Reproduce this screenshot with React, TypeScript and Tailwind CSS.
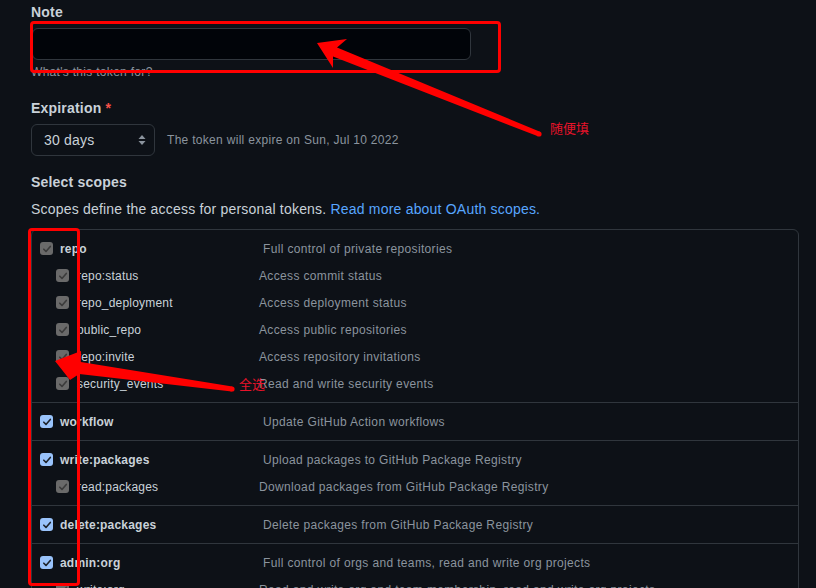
import React from 'react';

type Scope = { name: string; desc: string; checked: 'gray' | 'blue' };
type Group = { parent: Scope; children: Scope[] };

const GROUPS: Group[] = [
  {
    parent: { name: 'repo', desc: 'Full control of private repositories', checked: 'gray' },
    children: [
      { name: 'repo:status', desc: 'Access commit status', checked: 'gray' },
      { name: 'repo_deployment', desc: 'Access deployment status', checked: 'gray' },
      { name: 'public_repo', desc: 'Access public repositories', checked: 'gray' },
      { name: 'repo:invite', desc: 'Access repository invitations', checked: 'gray' },
      { name: 'security_events', desc: 'Read and write security events', checked: 'gray' },
    ],
  },
  {
    parent: { name: 'workflow', desc: 'Update GitHub Action workflows', checked: 'blue' },
    children: [],
  },
  {
    parent: { name: 'write:packages', desc: 'Upload packages to GitHub Package Registry', checked: 'blue' },
    children: [{ name: 'read:packages', desc: 'Download packages from GitHub Package Registry', checked: 'gray' }],
  },
  {
    parent: { name: 'delete:packages', desc: 'Delete packages from GitHub Package Registry', checked: 'blue' },
    children: [],
  },
  {
    parent: { name: 'admin:org', desc: 'Full control of orgs and teams, read and write org projects', checked: 'blue' },
    children: [
      { name: 'write:org', desc: 'Read and write org and team membership, read and write org projects', checked: 'gray' },
    ],
  },
];

function Check({ kind }: { kind: 'gray' | 'blue' }) {
  const blue = kind === 'blue';
  return (
    <span
      className={`w-[13px] h-[13px] rounded-[3px] flex items-center justify-center shrink-0 ${
        blue ? 'bg-[#99c3fb]' : 'bg-[#6a6a6a]'
      }`}
    >
      <svg width="10" height="10" viewBox="0 0 10 10" fill="none">
        <path
          d="M1.8 5.2 L4 7.4 L8.3 2.4"
          stroke={blue ? '#1d232b' : '#3b3b3b'}
          strokeWidth="1.6"
          strokeLinecap="round"
          strokeLinejoin="round"
        />
      </svg>
    </span>
  );
}

export default function App() {
  return (
    <div
      className="relative w-[816px] h-[588px] overflow-hidden bg-[#0d1117] text-[#c9d1d9] px-[31px] pt-[2px]"
      style={{ fontFamily: '"Liberation Sans", Arial, sans-serif' }}
    >
      {/* Note */}
      <div className="text-[14px] leading-[20px] font-bold tracking-[0.2px]">Note</div>
      <div className="mt-[6px] w-[439px] h-[32px] ml-[1px] rounded-[6px] bg-[#010409] border border-[#30363d]" />
      <div className="mt-[3px] text-[12px] leading-[18px] text-[#8b949e] tracking-[0.3px]">What's this token for?</div>

      {/* Expiration */}
      <div className="mt-[17px] text-[14px] leading-[20px] font-bold tracking-[0.2px]">
        Expiration <span className="text-[#f85149]">*</span>
      </div>
      <div className="mt-[6px] flex items-center gap-[12px]">
        <div className="w-[124px] h-[32px] rounded-[6px] border border-[#30363d] bg-[#0d1117] flex items-center justify-between pl-[12px] pr-[7px]">
          <span className="text-[14px] tracking-[0.2px]">30 days</span>
          <svg width="10" height="14" viewBox="0 0 10 14">
            <path d="M5 2 L8.5 6 H1.5 Z" fill="#8b949e" />
            <path d="M5 12 L8.5 8 H1.5 Z" fill="#8b949e" />
          </svg>
        </div>
        <span className="text-[12px] text-[#8b949e] tracking-[0.3px]">The token will expire on Sun, Jul 10 2022</span>
      </div>

      {/* Scopes */}
      <div className="mt-[16px] text-[14px] leading-[20px] font-bold tracking-[0.2px]">Select scopes</div>
      <div className="mt-[7px] text-[14px] leading-[20px] tracking-[0.2px]">
        Scopes define the access for personal tokens.{' '}
        <span className="text-[#58a6ff]">Read more about OAuth scopes.</span>
      </div>

      <div className="mt-[10px] w-[768px] border border-[#30363d] rounded-t-[6px]">
        {GROUPS.map((g, i) => (
          <div key={g.parent.name} className={`py-[5px] ${i > 0 ? 'border-t border-[#30363d]' : ''}`}>
            <div className="h-[27px] flex items-center pl-[8px] text-[12px]">
              <div className="w-[223px] flex items-center gap-[7px] font-bold tracking-[0.2px]">
                <Check kind={g.parent.checked} />
                {g.parent.name}
              </div>
              <span className="text-[#8b949e] tracking-[0.35px]">{g.parent.desc}</span>
            </div>
            {g.children.map((c) => (
              <div key={c.name} className="h-[27px] flex items-center pl-[24px] text-[12px]">
                <div className="w-[203px] flex items-center gap-[8px] tracking-[0.2px]">
                  <Check kind={c.checked} />
                  {c.name}
                </div>
                <span className="text-[#8b949e] tracking-[0.35px]">{c.desc}</span>
              </div>
            ))}
          </div>
        ))}
      </div>

      {/* annotations */}
      <div className="absolute left-[30px] top-[21px] w-[471px] h-[52px] border-[3px] border-[#ff0000] rounded-[4px] pointer-events-none" />
      <div className="absolute left-[28px] top-[228px] w-[52px] h-[358px] border-[3px] border-[#ff0000] rounded-[4px] pointer-events-none" />
      <svg className="absolute left-0 top-0 pointer-events-none" width="816" height="588" viewBox="0 0 816 588">
        <polygon
          points="317,43 347,39 337,47.4 540,131.7 538,136.3 333,56.6 333,68"
          fill="#ff0000"
        />
        <circle cx="539" cy="134" r="2.6" fill="#ff0000" />
        <polygon
          points="55,361 81,351 80.8,362 232.3,386.5 231.7,391.5 79.2,374 70,380"
          fill="#ff0000"
        />
        <circle cx="232" cy="389" r="2.6" fill="#ff0000" />
      </svg>
      <span
        className="absolute left-[550px] top-[119px] text-[13px] leading-[18px] text-[#e8132a]"
        style={{ fontFamily: '"Noto Sans CJK SC", sans-serif' }}
      >
        随便填
      </span>
      <span
        className="absolute left-[239px] top-[375px] text-[13px] leading-[18px] text-[#e8132a]"
        style={{ fontFamily: '"Noto Sans CJK SC", sans-serif' }}
      >
        全选
      </span>
    </div>
  );
}
